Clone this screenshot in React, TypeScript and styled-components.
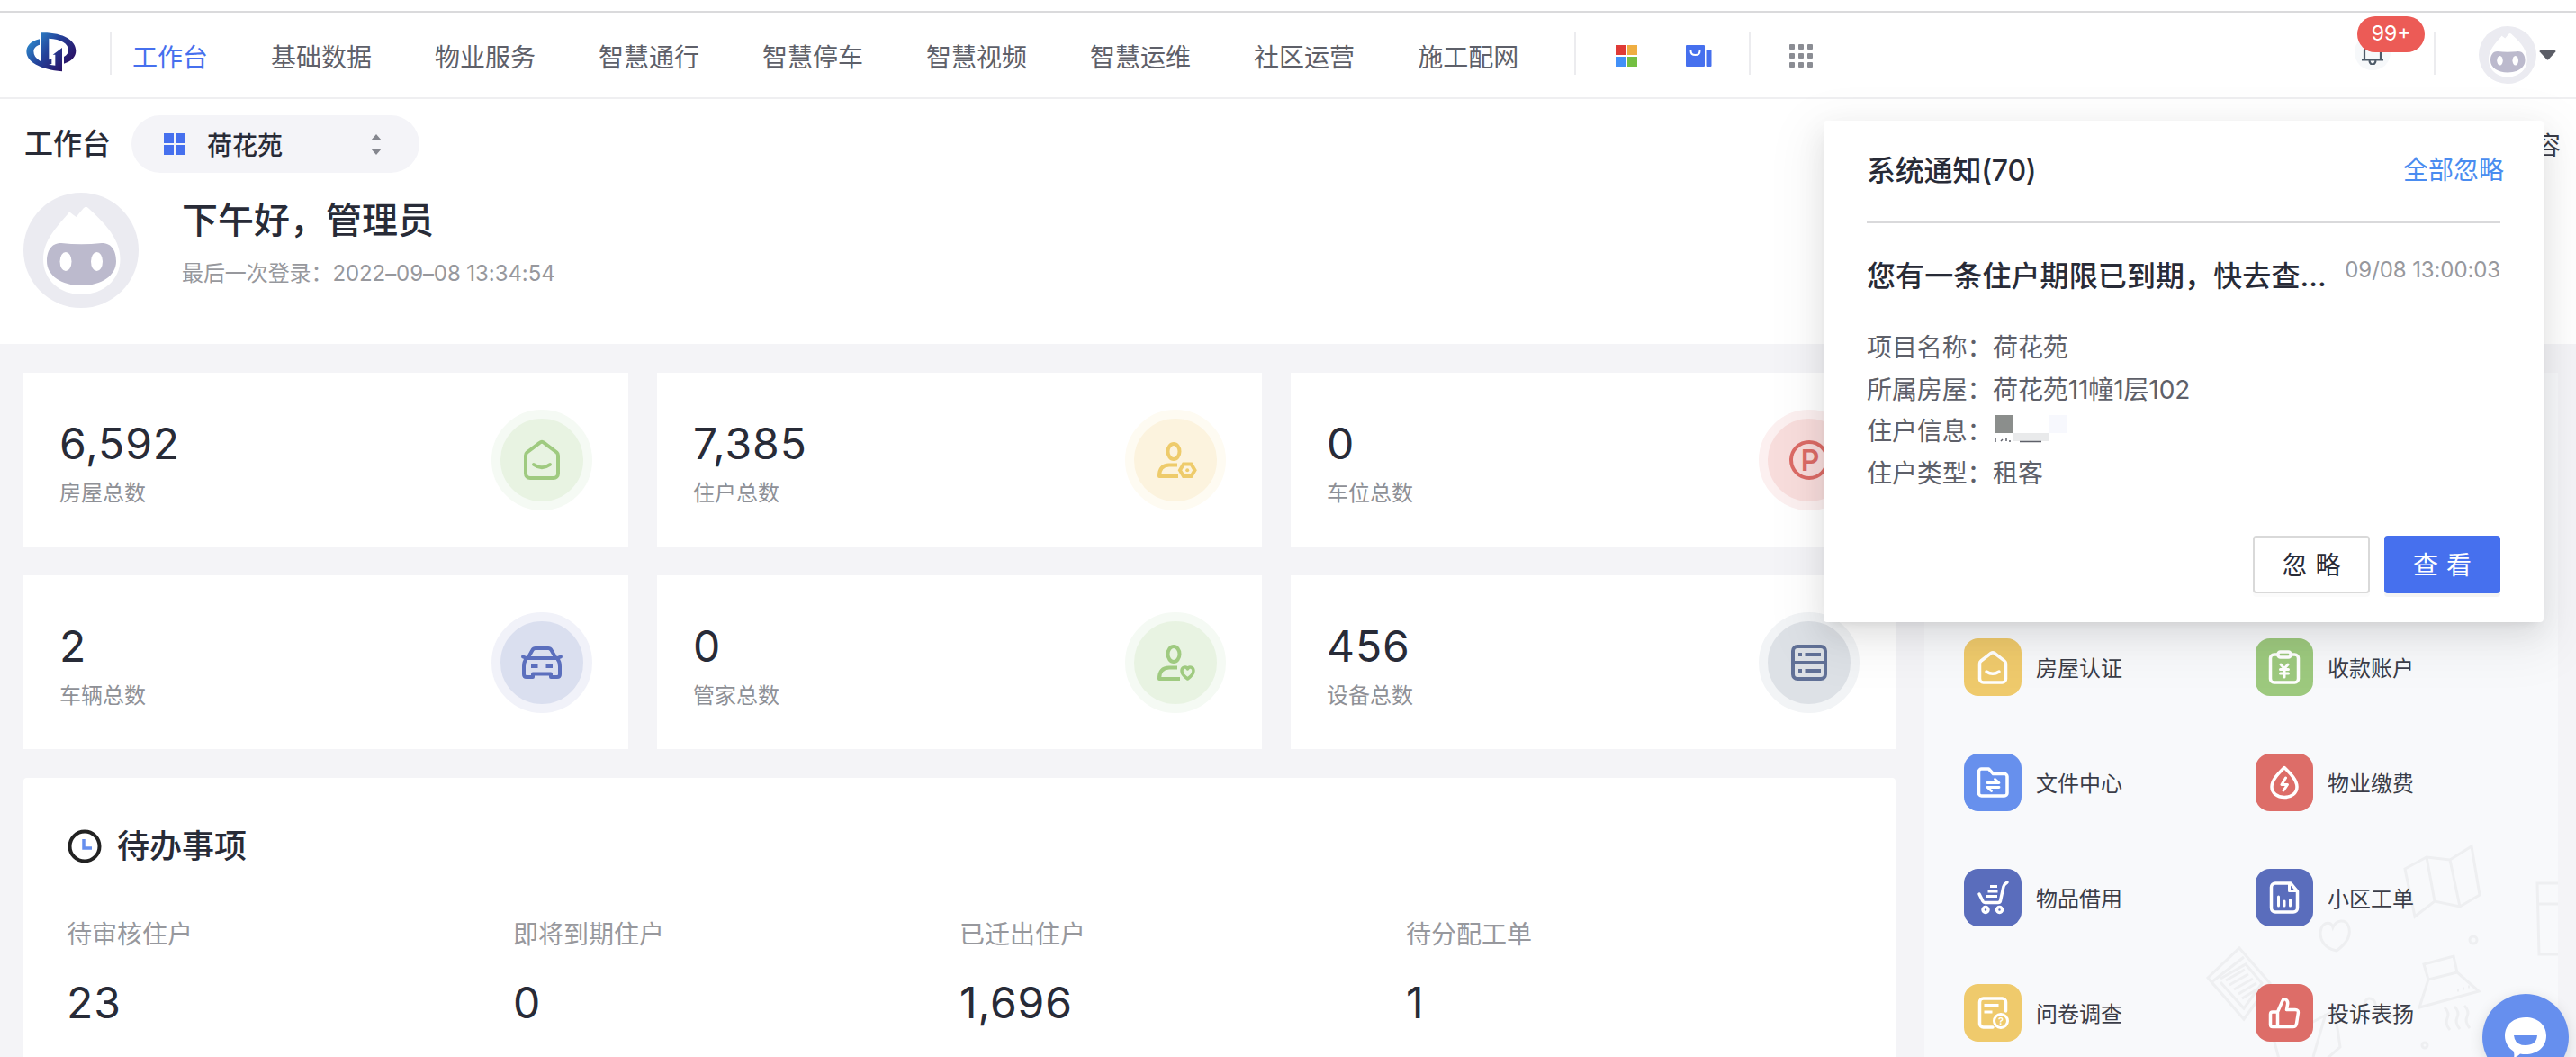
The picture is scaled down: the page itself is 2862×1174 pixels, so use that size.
import React from 'react';
import styled, { createGlobalStyle } from 'styled-components';

const FONT = `'Inter', 'Noto Sans CJK SC', sans-serif`;

const GlobalStyle = createGlobalStyle`
    * {
        box-sizing: border-box;
    }
    body {
        margin: 0;
        background: #f4f4f7;
        font-family: ${FONT};
        color: #282b37;
    }
`;

const Page = styled.div`
    position: relative;
    width: 2862px;
    height: 1174px;
    overflow: hidden;
    background: #f4f4f7;
`;

const TopStrip = styled.div`
    height: 14px;
    background: #fff;
    border-bottom: 2px solid #dadadc;
`;

/* ---------- header ---------- */

const Header = styled.header`
    display: flex;
    align-items: flex-start;
    height: 96px;
    padding: 0 22px 0 28px;
    background: #fff;
    border-bottom: 2px solid #efeff1;
`;

const LogoSvg = styled.svg`
    margin-top: 21px;
    flex: none;
`;

const Divider = styled.div<{ $left: number; $right: number }>`
    flex: none;
    width: 2px;
    height: 48px;
    margin: 21px ${p => p.$right}px 0 ${p => p.$left}px;
    background: #ececef;
`;

const Nav = styled.nav`
    display: flex;
    gap: 70px;
    margin-top: 30px;
`;

const NavItem = styled.a<{ $active?: boolean }>`
    font-size: 28px;
    line-height: 40px;
    white-space: nowrap;
    color: ${p => (p.$active ? '#4670ee' : '#5e6069')};
`;

const ColorGrid = styled.div`
    display: grid;
    grid-template-columns: 11px 11px;
    grid-template-rows: 11px 11px;
    gap: 2px;
    margin-top: 36px;
`;

const Cell = styled.span<{ $color: string }>`
    background: ${p => p.$color};
`;

const BagSvg = styled.svg`
    margin: 36px 0 0 54px;
`;

const AppsSvg = styled.svg`
    margin-top: 35px;
`;

const HeaderRight = styled.div`
    display: flex;
    margin-left: auto;
`;

const Bell = styled.div`
    position: relative;
    display: flex;
    align-items: center;
    justify-content: center;
    width: 40px;
    height: 40px;
    margin-top: 24px;
    border-radius: 50%;
    background: #f6f8fa;
`;

const Badge = styled.span`
    position: absolute;
    top: -20px;
    left: 3px;
    width: 75px;
    height: 40px;
    border-radius: 20px;
    background: #ec5b56;
    color: #fff;
    font-size: 23px;
    line-height: 39px;
    text-align: center;
`;

const HeaderAvatar = styled.div`
    display: flex;
    align-items: center;
    gap: 3px;
    height: 64px;
    margin-top: 15px;
`;

/* ---------- welcome ---------- */

const Welcome = styled.section`
    height: 272px;
    padding: 18px 17px 0 26px;
    background: #fff;
`;

const TitleRow = styled.div`
    display: flex;
    align-items: center;
    height: 64px;
`;

const PageTitle = styled.h1`
    margin: 0 23px 0 1px;
    font-size: 32px;
    font-weight: 500;
    line-height: 64px;
`;

const ProjectSelect = styled.div`
    display: flex;
    align-items: center;
    width: 320px;
    height: 64px;
    padding: 0 42px 0 36px;
    border-radius: 32px;
    background: #f4f4f8;
    font-size: 28px;
    font-weight: 500;
`;

const BlueGrid = styled(ColorGrid)`
    margin: 0 24px 0 0;
`;

const ProjectName = styled.span`
    flex: 1;
`;

const CustomLink = styled.span`
    margin-left: auto;
    font-size: 28px;
    color: #3b3d48;
`;

const Profile = styled.div`
    display: flex;
    gap: 48px;
    margin-top: 22px;
`;

const Greeting = styled.h2`
    margin: 3px 0 14px;
    font-size: 40px;
    font-weight: 500;
    line-height: 56px;
`;

const LastLogin = styled.p`
    margin: 0;
    font-size: 24px;
    line-height: 34px;
    letter-spacing: -0.08px;
    color: #97989d;
`;

/* ---------- content ---------- */

const Content = styled.main`
    display: flex;
    gap: 32px;
    padding: 32px 20px 0 26px;
`;

const LeftColumn = styled.div`
    width: 2080px;
`;

const StatGrid = styled.div`
    display: grid;
    grid-template-columns: repeat(3, 672px);
    grid-auto-rows: 193px;
    gap: 32px;
`;

const StatCard = styled.div`
    display: flex;
    justify-content: space-between;
    align-items: flex-start;
    padding: 41px 40px 0;
    background: #fff;
`;

const StatValue = styled.div`
    margin-top: 10px;
    font-size: 48px;
    font-weight: 400;
    line-height: 56px;
    letter-spacing: 0.9px;
`;

const StatLabel = styled.div`
    margin-top: 10px;
    font-size: 24px;
    line-height: 34px;
    color: #8e9096;
`;

const StatBadge = styled.div<{ $color: string; $fill: string; $ring: string }>`
    display: flex;
    align-items: center;
    justify-content: center;
    width: 112px;
    height: 112px;
    border: 10px solid ${p => p.$ring};
    border-radius: 50%;
    background: ${p => p.$fill};
    color: ${p => p.$color};
`;

const TodoCard = styled.section`
    height: 420px;
    margin-top: 32px;
    padding: 51px 48px 0;
    border-radius: 4px;
    background: #fff;
`;

const TodoTitle = styled.h3`
    display: flex;
    align-items: center;
    gap: 17px;
    margin: 0 0 0 1px;
    font-size: 36px;
    font-weight: 500;
    line-height: 50px;
`;

const TodoGrid = styled.div`
    display: grid;
    grid-template-columns: repeat(4, 496px);
    margin-top: 53px;
`;

const TodoLabel = styled.div`
    font-size: 28px;
    line-height: 40px;
    color: #97989d;
`;

const TodoValue = styled(StatValue)`
    margin-top: 28px;
`;

/* ---------- shortcuts ---------- */

const ShortcutPanel = styled.aside`
    position: relative;
    width: 704px;
    height: 800px;
    padding: 295px 0 0 44px;
    background: #f8f9fb;
`;

const DoodleSvg = styled.svg`
    position: absolute;
    right: 0;
    top: 516px;
`;

const ShortcutGrid = styled.div`
    position: relative;
    display: grid;
    grid-template-columns: 324px 324px;
    row-gap: 64px;
`;

const Shortcut = styled.div`
    display: flex;
    align-items: center;
    gap: 16px;
    height: 64px;
    font-size: 24px;
    color: #3b3d48;
`;

const ShortcutLabel = styled.span`
    padding-bottom: 2px;
`;

const ShortcutTile = styled.span<{ $color: string }>`
    display: flex;
    width: 64px;
    height: 64px;
    border-radius: 16px;
    background: ${p => p.$color};
    color: #fff;
`;

const ChatButton = styled.div`
    position: absolute;
    left: 2758px;
    top: 1104px;
    width: 96px;
    height: 96px;
    border-radius: 50%;
    background: #668fee;
    box-shadow: 0 4px 16px rgba(0, 0, 0, 0.12);
`;

/* ---------- notification popup ---------- */

const Popup = styled.div`
    position: absolute;
    left: 2026px;
    top: 134px;
    width: 800px;
    height: 557px;
    padding: 33px 48px 0;
    border-radius: 4px;
    background: #fff;
    box-shadow: 0 6px 12px -8px rgba(0, 0, 0, 0.12), 0 12px 32px 0 rgba(0, 0, 0, 0.08),
        0 18px 56px 16px rgba(0, 0, 0, 0.05);
`;

const PopupHead = styled.div`
    display: flex;
    justify-content: space-between;
    height: 81px;
    border-bottom: 2px solid #d9d9db;
`;

const PopupTitle = styled.div`
    font-size: 32px;
    font-weight: 500;
    line-height: 46px;
    letter-spacing: -0.2px;
`;

const IgnoreAll = styled.a`
    margin-right: -4px;
    font-size: 28px;
    line-height: 44px;
    color: #4a8cf0;
`;

const NoticeHead = styled.div`
    display: flex;
    justify-content: space-between;
    margin-top: 36px;
`;

const NoticeTitle = styled.div`
    width: 514px;
    font-size: 32px;
    font-weight: 500;
    line-height: 46px;
    letter-spacing: 0.1px;
    white-space: nowrap;
`;

const NoticeTime = styled.div`
    font-size: 24px;
    line-height: 32px;
    letter-spacing: -0.1px;
    color: #97989d;
    white-space: nowrap;
`;

const NoticeBody = styled.div`
    margin-top: 33px;
`;

const NoticeRow = styled.div`
    display: flex;
    height: 46.5px;
    font-size: 28px;
    line-height: 46px;
    letter-spacing: -0.1px;
    color: #5e6069;
`;

const NoticeKey = styled.span`
    width: 140px;
`;

const Mosaic = styled.svg`
    margin: 5px 0 0 2px;
`;

const PopupActions = styled.div`
    display: flex;
    justify-content: flex-end;
    gap: 16px;
    margin-top: 46px;
`;

const Button = styled.button<{ $primary?: boolean }>`
    width: ${p => (p.$primary ? 129 : 130)}px;
    height: 64px;
    padding: 0 0 2px 9px;
    border: 2px solid ${p => (p.$primary ? '#4670ee' : '#d9d9d9')};
    border-radius: 4px;
    background: ${p => (p.$primary ? '#4670ee' : '#fff')};
    box-shadow: 0 4px 0 rgba(0, 0, 0, ${p => (p.$primary ? 0.045 : 0.015)});
    color: ${p => (p.$primary ? '#fff' : '#282b37')};
    font-family: ${FONT};
    font-size: 28px;
    letter-spacing: 9px;
`;

/* ---------- drawings ---------- */

const Logo = () => (
    <LogoSvg width="58" height="45.3" viewBox="24 26 174 136">
        <defs>
            <linearGradient id="lg" gradientUnits="userSpaceOnUse" x1="40" y1="40" x2="160" y2="140">
                <stop offset="0" stopColor="#2f8fd0" />
                <stop offset="0.5" stopColor="#24429a" />
                <stop offset="1" stopColor="#2a1468" />
            </linearGradient>
        </defs>
        <path
            fill="url(#lg)"
            d="M72 51C42 58 28 74 28 93c0 34 46 60 119 66V80l-31 23h8v36c-44-4-72-23-72-47 0-10 7-18 20-22z"
        />
        <path
            fill="url(#lg)"
            d="M77 30c72-2 116 25 116 60 0 20-14 36-40 43v-23c10-6 15-13 15-22 0-22-25-37-65-39v71l9-3v17l-19 5-16-9z"
        />
    </LogoSvg>
);

const Avatar = ({ size }: { size: number }) => (
    <svg width={size} height={size} viewBox="0 0 128 128">
        <circle cx="64" cy="64" r="64" fill="#ebebf1" />
        <path
            fill="#fff"
            d="M52 22l6.500 5 8-9.500q3-3.500 6 0C88 32 107.500 50 107.500 74c0 23-19 39-43 39S22 97 22 74c0-20 13-34 27.500-50.500q1.200-2.500 2.500-1.500z"
        />
        <path
            fill="#bcbacd"
            d="M42 56q22 2.500 45 0c12 0 16 10 16 20 0 16-16 27-38.500 27S26 92 26 76c0-10 4-20 16-20z"
        />
        <ellipse cx="47" cy="76.500" rx="6.500" ry="10.500" fill="#fff" />
        <ellipse cx="81.500" cy="76.500" rx="6.500" ry="10.500" fill="#fff" />
    </svg>
);

const Stroke = ({ size = 48, width = 4, children }: { size?: number; width?: number; children: React.ReactNode }) => (
    <svg
        width={size}
        height={size}
        viewBox={`0 0 ${size} ${size}`}
        fill="none"
        stroke="currentColor"
        strokeWidth={width}
        strokeLinecap="round"
        strokeLinejoin="round"
    >
        {children}
    </svg>
);

const Glyph = styled.text`
    font-family: ${FONT};
    font-weight: 600;
    fill: currentColor;
    stroke: none;
    text-anchor: middle;
`;

const statIcons: Record<string, React.ReactNode> = {
    house: (
        <>
            <path d="M21.500 4.800L7.500 15.500Q6 16.800 6 19v20a5 5 0 0 0 5 5h26a5 5 0 0 0 5-5V19q0-2.200-1.500-3.500L26.500 4.800a4 4 0 0 0-5 0z" />
            <path d="M15 29q9 6.500 18 0" />
        </>
    ),
    residents: (
        <>
            <ellipse cx="22" cy="14.500" rx="6.500" ry="8.500" />
            <path strokeLinecap="butt" d="M26 29.500H17q-11 0-11 12.500h21" />
            <path strokeLinejoin="miter" d="M33 28.500h8.500l4 6.800-4 6.700H33l-4-6.700z" />
            <circle cx="37.200" cy="35.300" r="2" fill="currentColor" stroke="none" />
        </>
    ),
    parking: (
        <>
            <circle cx="24" cy="24" r="20" />
            <Glyph x="25" y="35.500" fontSize="32">P</Glyph>
        </>
    ),
    car: (
        <>
            <path d="M9 18l4.500-8Q14.500 8 17 8h14q2.500 0 3.500 2l4.500 8" />
            <path d="M3 17.500l4 1.500h34l4-1.500" />
            <path d="M7 19q-3 4-3 9v9q0 3 3 3h7v-3.500h20V40h7q3 0 3-3v-9q0-5-3-9" />
            <path strokeLinecap="butt" d="M12 28h7.500M28.500 28H36" />
        </>
    ),
    keeper: (
        <>
            <ellipse cx="22" cy="14.500" rx="6.500" ry="8.500" />
            <path strokeLinecap="butt" d="M26 29.500H17q-11 0-11 12.500h23" />
            <path strokeWidth="3.500" d="M37.500 42c-5-3.500-6.500-6.500-6.500-9 0-4 5-5.500 6.500-2 1.500-3.500 6.500-2 6.500 2 0 2.500-1.500 5.500-6.500 9z" />
        </>
    ),
    device: (
        <>
            <rect x="6" y="6" width="36" height="36" rx="5" />
            <path strokeLinecap="butt" d="M6 24h36M12 15h4M19.500 15H37M12 33h4M19.500 33H37" />
        </>
    ),
};

const tileIcons: Record<string, React.ReactNode> = {
    house: (
        <>
            <path d="M30 16.500L19 25q-1.500 1.200-1.500 3v17a4 4 0 0 0 4 4h21a4 4 0 0 0 4-4V28q0-1.800-1.500-3L34 16.500a3.500 3.500 0 0 0-4 0z" />
            <path d="M25 37q7 4.500 14 0" />
        </>
    ),
    account: (
        <>
            <path d="M24 18h-3.500a4 4 0 0 0-4 4v23a4 4 0 0 0 4 4h23a4 4 0 0 0 4-4V22a4 4 0 0 0-4-4H40" />
            <rect x="25" y="15" width="14" height="6" rx="2.500" />
            <path d="M28 29l4 4.500 4-4.500M32 34v9M27.500 34.500h9M27.500 39h9" strokeWidth="3" />
        </>
    ),
    file: (
        <>
            <path d="M16.500 20a3 3 0 0 1 3-3h8l5 5.500H45a3 3 0 0 1 3 3V44a3 3 0 0 1-3 3H19.500a3 3 0 0 1-3-3z" />
            <path d="M26 32.500h13l-4.500-4M39 37.500H26l4.500 4" strokeWidth="2.800" />
        </>
    ),
    fee: (
        <>
            <path d="M32 15.500c6 6 14 13.500 14 21.500 0 7-6.200 11.500-14 11.500S18 44 18 37c0-8 8-15.500 14-21.500z" />
            <path d="M33.500 27l-4.500 7.500h6.500L31 41" strokeWidth="3" />
        </>
    ),
    borrow: (
        <>
            <path d="M17 28l4 8q.8 1.500 2.500 1.500H38q2 0 2.500-2l3.500-16q.6-2.500 4-4.500" />
            <path strokeLinecap="butt" d="M29 19.500h8M26.500 25h11M25 30.500h12" strokeWidth="3" />
            <circle cx="24" cy="45.500" r="3" />
            <circle cx="39.500" cy="45.500" r="3" />
        </>
    ),
    order: (
        <>
            <path d="M39 16H22a4.500 4.500 0 0 0-4.500 4.500v23A4.500 4.500 0 0 0 22 48h20a4.500 4.500 0 0 0 4.500-4.500V25z" />
            <path d="M37.500 17v7.500h8" strokeWidth="3" />
            <path d="M25.500 31v10M32 36v5M38.500 34.500V41" strokeWidth="3" />
        </>
    ),
    survey: (
        <>
            <path d="M32 48H21.500a4 4 0 0 1-4-4V20a4 4 0 0 1 4-4h21a4 4 0 0 1 4 4v10" />
            <path strokeLinecap="butt" d="M22.500 23.500h16M22.500 31h9" strokeWidth="3" />
            <circle cx="41" cy="41" r="7.500" strokeWidth="3" />
            <Glyph x="41" y="45" fontSize="11">?</Glyph>
        </>
    ),
    praise: (
        <path d="M24.500 31v16.500M19 31h5.500L30 18.500q1-2.500 3-1.500 3.500 1.500 2.500 6l-1 5.500H44q4 0 3.300 4l-1.800 11.500q-.6 3.500-4 3.500H19q-2.500 0-2.500-2.500v-11.500Q16.500 31 19 31z" />
    ),
};

const Doodles = () => (
    <DoodleSvg width="402" height="244" viewBox="0 0 402 244" fill="none" stroke="#eeeff1" strokeWidth="3">
        <path d="M232 35l24-13 26 3 24-15 9 54-22 13-28-6-22 17zM256 22l9 49M282 25l11 52" />
        <path d="M156 126c-16-3-20-16-17-25 3-7 11-8 13-1 4-9 14-9 17-2 4 10-2 20-13 28z" />
        <circle cx="308" cy="114" r="4" />
        <path d="M402 51h-23l2 79h21M380 74h22" />
        <path d="M253 141l33-9 4 18 24 21-66 18 10-31zM258 158l32-8" />
        <path d="M290 170h2M296 168h2M302 166h2" />
        <path d="M276 189q6 6 3 12t3 13M287 188q6 6 3 12t3 13M298 187q6 6 3 12t3 13" />
        <path d="M48 123l34 39-29 40-40-46zM17 161l36-28M27 157l28-16 18 21-20 28-26-29M33 159l21-12M37 164l21-12M42 169l21-12M47 174l20-12M51 179l18-11" />
        <path d="M128 206l26-14 6 41-16 14M85 220l8 30M144 196l-14 48M186 192q1-14 7-13 8 1 6 14" />
        <circle cx="254" cy="231" r="3" />
    </DoodleSvg>
);

/* ---------- data ---------- */

const navItems = ['工作台', '基础数据', '物业服务', '智慧通行', '智慧停车', '智慧视频', '智慧运维', '社区运营', '施工配网'];

const stats = [
    { value: '6,592', label: '房屋总数', icon: 'house', color: '#9fca80', fill: '#e8f3e2', ring: '#f5faf4' },
    { value: '7,385', label: '住户总数', icon: 'residents', color: '#eecb6b', fill: '#fcf3de', ring: '#fefbf2' },
    { value: '0', label: '车位总数', icon: 'parking', color: '#dc6b66', fill: '#f8dddc', ring: '#fcf0f0' },
    { value: '2', label: '车辆总数', icon: 'car', color: '#5b6fbd', fill: '#dadfef', ring: '#f1f2f9' },
    { value: '0', label: '管家总数', icon: 'keeper', color: '#9fca80', fill: '#e8f3e2', ring: '#f5faf4' },
    { value: '456', label: '设备总数', icon: 'device', color: '#617197', fill: '#dde1e6', ring: '#f2f4f6' },
];

const todos = [
    { label: '待审核住户', value: '23' },
    { label: '即将到期住户', value: '0' },
    { label: '已迁出住户', value: '1,696' },
    { label: '待分配工单', value: '1' },
];

const shortcuts = [
    { label: '房屋认证', icon: 'house', color: '#efca6c' },
    { label: '收款账户', icon: 'account', color: '#9dc97e' },
    { label: '文件中心', icon: 'file', color: '#6790ed' },
    { label: '物业缴费', icon: 'fee', color: '#dd6d68' },
    { label: '物品借用', icon: 'borrow', color: '#5a6dbc' },
    { label: '小区工单', icon: 'order', color: '#5a6dbc' },
    { label: '问卷调查', icon: 'survey', color: '#efca6c' },
    { label: '投诉表扬', icon: 'praise', color: '#dd6d68' },
];

const TopHeader = () => (
    <Header>
        <Logo />
        <Divider $left={36} $right={23} />
        <Nav>
            {navItems.map((item, index) => (
                <NavItem key={item} $active={index === 0}>{item}</NavItem>
            ))}
        </Nav>
        <Divider $left={62} $right={44} />
        <ColorGrid>
            <Cell $color="#e03a36" />
            <Cell $color="#efae42" />
            <Cell $color="#4290f7" />
            <Cell $color="#74bf42" />
        </ColorGrid>
        <BagSvg width="29" height="24" viewBox="0 0 29 24">
            <rect width="21" height="24" rx="1" fill="#4670ee" />
            <rect x="22.500" y="5" width="6" height="19" rx="1" fill="#4670ee" />
            <path d="M5.500 6.500q0 4.500 5 4.500t5-4.500" fill="none" stroke="#fff" strokeWidth="2" strokeLinecap="round" />
        </BagSvg>
        <Divider $left={41} $right={43} />
        <AppsSvg width="26" height="26" viewBox="0 0 26 26" fill="#8b8d94">
            {[0, 10, 20].map(y => [0, 10, 20].map(x => (
                <rect key={`${x}-${y}`} x={x} y={y} width="6" height="6" rx="1" />
            )))}
        </AppsSvg>
        <HeaderRight>
            <Bell>
                <svg width="26" height="28" viewBox="0 0 26 28" fill="none" stroke="#4d5a68" strokeWidth="2.200">
                    <path d="M1 22.500h24M4 22V11a9 9 0 0 1 18 0v11M9.500 23.500q.5 4 3.500 4t3.500-4" />
                </svg>
                <Badge>99+</Badge>
            </Bell>
            <Divider $left={48} $right={48} />
            <HeaderAvatar>
                <Avatar size={64} />
                <svg width="19" height="11" viewBox="0 0 19 11">
                    <path d="M1.500 0h16q1.500.3.800 1.500L10.500 10q-1 1-2 0L.700 1.500Q0 .3 1.500 0z" fill="#5b5d66" />
                </svg>
            </HeaderAvatar>
        </HeaderRight>
    </Header>
);

const NoticePopup = () => (
    <Popup>
        <PopupHead>
            <PopupTitle>系统通知(70)</PopupTitle>
            <IgnoreAll>全部忽略</IgnoreAll>
        </PopupHead>
        <NoticeHead>
            <NoticeTitle>您有一条住户期限已到期，快去查...</NoticeTitle>
            <NoticeTime>09/08 13:00:03</NoticeTime>
        </NoticeHead>
        <NoticeBody>
            <NoticeRow><NoticeKey>项目名称：</NoticeKey>荷花苑</NoticeRow>
            <NoticeRow><NoticeKey>所属房屋：</NoticeKey>荷花苑11幢1层102</NoticeRow>
            <NoticeRow>
                <NoticeKey>住户信息：</NoticeKey>
                <Mosaic width="80" height="31" viewBox="0 0 80 31">
                    <rect width="20" height="20" fill="#8b8e8c" />
                    <rect x="60" width="20" height="20" fill="#f7f8fd" />
                    <rect x="20" y="20" width="40" height="9" fill="#e9eaeb" />
                    <path d="M1 26v4M7 29l2-2M13 26v3M17 28v2M28 29.500h24" stroke="#5e6069" strokeWidth="1.500" />
                </Mosaic>
            </NoticeRow>
            <NoticeRow><NoticeKey>住户类型：</NoticeKey>租客</NoticeRow>
        </NoticeBody>
        <PopupActions>
            <Button>忽略</Button>
            <Button $primary>查看</Button>
        </PopupActions>
    </Popup>
);

const App: React.FC = () => (
    <Page>
        <GlobalStyle />
        <TopStrip />
        <TopHeader />

        <Welcome>
            <TitleRow>
                <PageTitle>工作台</PageTitle>
                <ProjectSelect>
                    <BlueGrid>
                        {[0, 1, 2, 3].map(i => <Cell key={i} $color="#4670ee" />)}
                    </BlueGrid>
                    <ProjectName>荷花苑</ProjectName>
                    <svg width="12" height="23" viewBox="0 0 12 23" fill="#85878f">
                        <path d="M6 0l6 7H0zM6 23l6-7H0z" />
                    </svg>
                </ProjectSelect>
                <CustomLink>容</CustomLink>
            </TitleRow>
            <Profile>
                <Avatar size={128} />
                <div>
                    <Greeting>下午好，管理员</Greeting>
                    <LastLogin>最后一次登录：2022–09–08 13:34:54</LastLogin>
                </div>
            </Profile>
        </Welcome>

        <Content>
            <LeftColumn>
                <StatGrid>
                    {stats.map(stat => (
                        <StatCard key={stat.label}>
                            <div>
                                <StatValue>{stat.value}</StatValue>
                                <StatLabel>{stat.label}</StatLabel>
                            </div>
                            <StatBadge $color={stat.color} $fill={stat.fill} $ring={stat.ring}>
                                <Stroke>{statIcons[stat.icon]}</Stroke>
                            </StatBadge>
                        </StatCard>
                    ))}
                </StatGrid>

                <TodoCard>
                    <TodoTitle>
                        <svg width="38" height="38" viewBox="0 0 38 38" fill="none" strokeWidth="4">
                            <circle cx="19" cy="19" r="16.500" stroke="#222" />
                            <path d="M18 11v10h9" stroke="#668fee" strokeWidth="3.500" />
                        </svg>
                        待办事项
                    </TodoTitle>
                    <TodoGrid>
                        {todos.map(todo => (
                            <div key={todo.label}>
                                <TodoLabel>{todo.label}</TodoLabel>
                                <TodoValue>{todo.value}</TodoValue>
                            </div>
                        ))}
                    </TodoGrid>
                </TodoCard>
            </LeftColumn>

            <ShortcutPanel>
                <Doodles />
                <ShortcutGrid>
                    {shortcuts.map(item => (
                        <Shortcut key={item.label}>
                            <ShortcutTile $color={item.color}>
                                <Stroke size={64} width={3.5}>{tileIcons[item.icon]}</Stroke>
                            </ShortcutTile>
                            <ShortcutLabel>{item.label}</ShortcutLabel>
                        </Shortcut>
                    ))}
                </ShortcutGrid>
            </ShortcutPanel>
        </Content>

        <ChatButton>
            <svg width="96" height="96" viewBox="0 0 96 96">
                <path d="M48 26c13 0 23 8 23 20.500S61 67 48 67q-3 0-6-.6-3 3-7 4.600 1-4.500-.5-7.500C29 60 25 54 25 46.500 25 34 35 26 48 26z" fill="#fff" />
                <path d="M35 46h26q-1 11-13 11T35 46z" fill="#668fee" />
            </svg>
        </ChatButton>

        <NoticePopup />
    </Page>
);

export default App;
